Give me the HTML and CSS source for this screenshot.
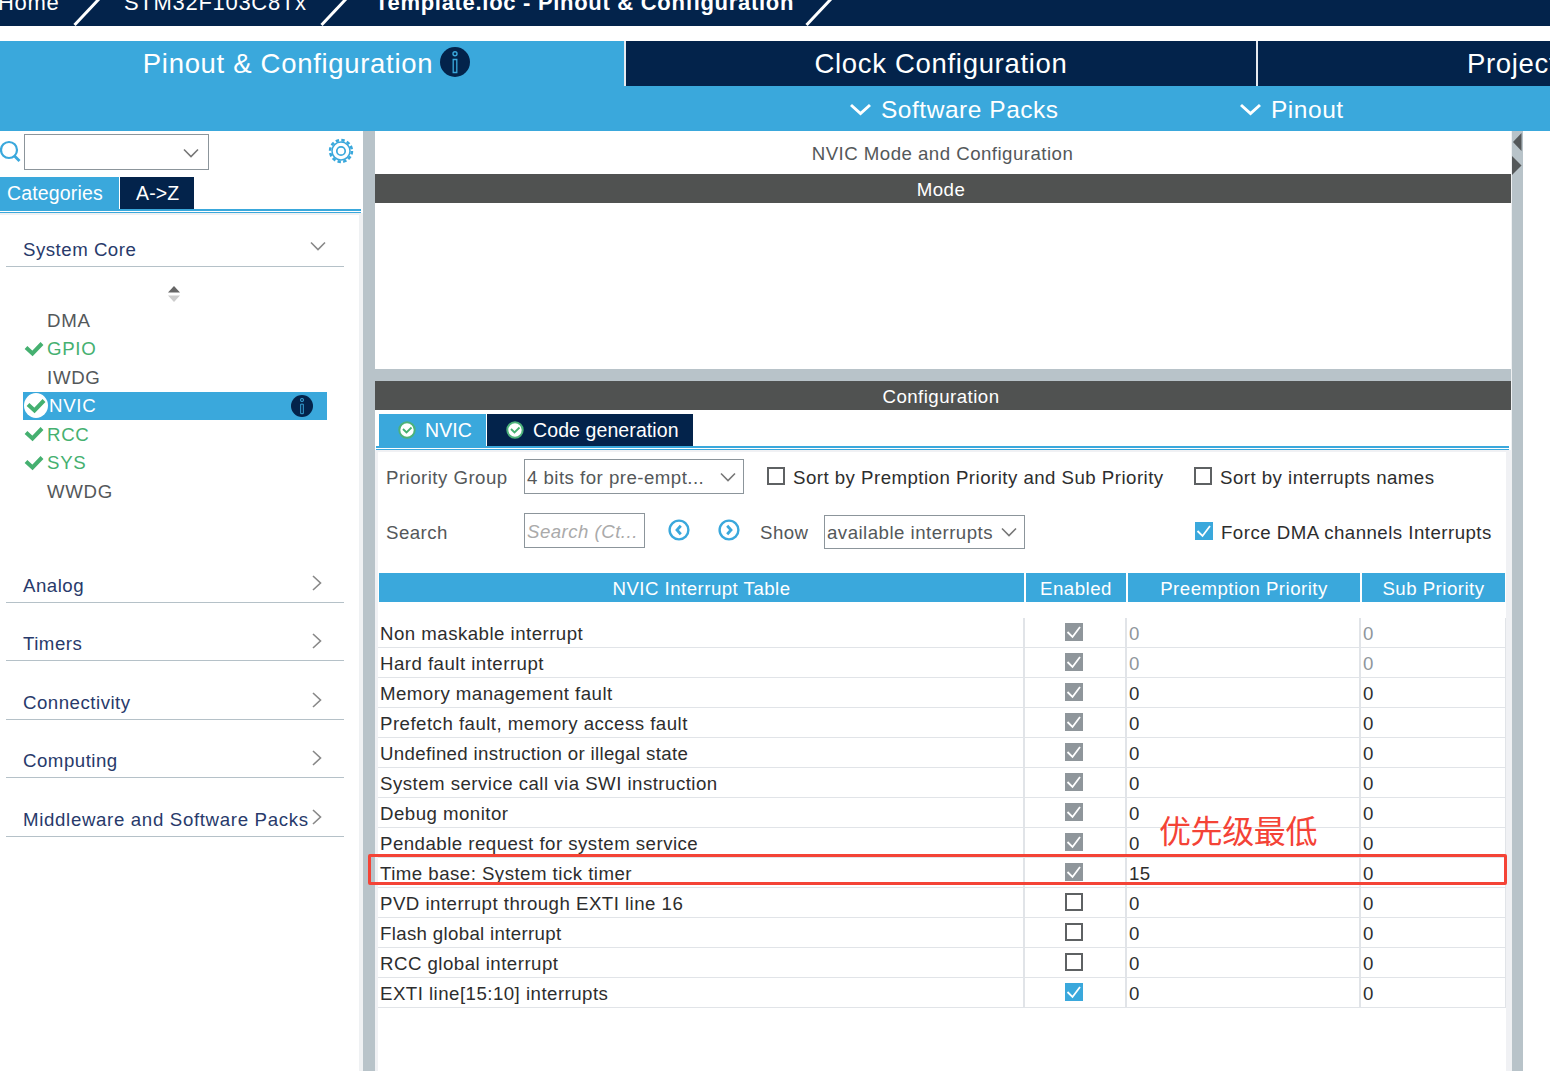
FILE: index.html
```html
<!DOCTYPE html>
<html lang="en">
<head>
    <meta charset="UTF-8">
    <meta name="viewport" content="width=device-width, initial-scale=1.0">
    <title>Template.ioc - Pinout &amp; Configuration</title>
    <link rel="stylesheet" href="styles.css">
</head>
<body>
    <svg class="defs">
        <symbol id="down" viewBox="0 0 16 10"><path d="M1 1.5 L8 8.5 L15 1.5" fill="none" stroke="currentColor"/></symbol>
        <symbol id="right" viewBox="0 0 10 16"><path d="M1 1 L8.5 8 L1 15" fill="none" stroke="currentColor" stroke-width="1.6"/></symbol>
        <symbol id="tick" viewBox="0 0 18 18"><path d="M2.5 9 L7.5 14 L15 4" fill="none" stroke="#fff" stroke-width="1.8"/></symbol>
        <symbol id="check" viewBox="0 0 20 16"><path d="M2 6.5 L8.5 12.5 L18 2.5" fill="none" stroke="#45b070" stroke-width="4"/></symbol>
        <symbol id="info" viewBox="0 0 30 30"><circle cx="15" cy="15" r="15" fill="#03234b"/><circle cx="15" cy="6.8" r="2" fill="none" stroke="#3aa8dc" stroke-width="1.4"/><path d="M13.2 12.5 h3.6 v13 h-3.6 z" fill="none" stroke="#3aa8dc" stroke-width="1.3"/></symbol>
        <symbol id="ok" viewBox="0 0 18 18"><circle cx="9" cy="9" r="7.7" fill="#fff" stroke="#4db27a" stroke-width="2"/><path d="M5 8 L8.5 11.5 L13.5 6.5" fill="none" stroke="#45b070" stroke-width="1.8"/></symbol>
    </svg>

    <!-- Breadcrumb -->
    <div class="breadcrumb">
        <span class="crumb home">Home</span>
        <svg class="slash" width="28" height="26"><path d="M1.5 25 L26 -1" stroke="#fff" stroke-width="3"/></svg>
        <span class="crumb chip">STM32F103C8Tx</span>
        <svg class="slash" width="28" height="26"><path d="M1.5 25 L26 -1" stroke="#fff" stroke-width="3"/></svg>
        <span class="crumb file">Template.ioc - Pinout &amp; Configuration</span>
        <svg class="slash" width="28" height="26"><path d="M1.5 25 L26 -1" stroke="#fff" stroke-width="3"/></svg>
    </div>

    <!-- Main tabs -->
    <div class="tabs">
        <div class="tab active">Pinout &amp; Configuration<svg width="30" height="30"><use href="#info"/></svg></div>
        <div class="tab">Clock Configuration</div>
        <div class="tab">Project Manager</div>
    </div>
    <div class="subbar">
        <div class="menu packs"><svg width="21" height="13" viewBox="0 0 21 13"><path d="M1 2 L10.5 10.5 L20 2" fill="none" stroke="#fff" stroke-width="3"/></svg>Software Packs</div>
        <div class="menu"><svg width="21" height="13" viewBox="0 0 21 13"><path d="M1 2 L10.5 10.5 L20 2" fill="none" stroke="#fff" stroke-width="3"/></svg>Pinout</div>
    </div>

    <div class="main">
        <div class="sidebar">
            <div class="search-row">
                <svg width="21" height="23" viewBox="0 0 21 23" fill="none" stroke="#3aa8dc"><circle cx="9" cy="10" r="8" stroke-width="2.2"/><path d="M14 15.5 L19.5 21" stroke-width="2.8"/></svg>
                <div class="combo search"><svg width="16" height="10"><use href="#down"/></svg></div>
                <svg class="gear" width="26" height="26" viewBox="0 0 26 26" fill="none" stroke="#3aa8dc">
                    <circle cx="13" cy="13" r="10.9" stroke-width="2.6" stroke-dasharray="3.4 2.307"/>
                    <circle cx="13" cy="13" r="9" stroke-width="1.5"/>
                    <circle cx="13" cy="13" r="4.2" stroke-width="1.7"/>
                </svg>
            </div>
            <div class="side-tabs">
                <span class="side-tab active">Categories</span>
                <span class="side-tab">A-&gt;Z</span>
            </div>
            <div class="double-line"></div>
            <div class="side-body">
                <div class="category open">System Core<svg width="16" height="10"><use href="#down" stroke-width="1.6"/></svg></div>
                <svg class="sorter" width="14" height="16" viewBox="0 0 14 16"><path d="M1 6.5 L7 0 L13 6.5z" fill="#666"/><path d="M1 9.5 L7 16 L13 9.5z" fill="#ccc"/></svg>
                <ul class="ip-list">
                    <li>DMA</li>
                    <li class="set"><svg width="20" height="16"><use href="#check"/></svg>GPIO</li>
                    <li>IWDG</li>
                    <li class="selected"><span class="disc"><svg width="20" height="16"><use href="#check"/></svg></span>NVIC<svg class="info" width="22" height="22"><use href="#info"/></svg></li>
                    <li class="set"><svg width="20" height="16"><use href="#check"/></svg>RCC</li>
                    <li class="set"><svg width="20" height="16"><use href="#check"/></svg>SYS</li>
                    <li>WWDG</li>
                </ul>
                <div class="category">Analog<svg width="10" height="16"><use href="#right"/></svg></div>
                <div class="category">Timers<svg width="10" height="16"><use href="#right"/></svg></div>
                <div class="category">Connectivity<svg width="10" height="16"><use href="#right"/></svg></div>
                <div class="category">Computing<svg width="10" height="16"><use href="#right"/></svg></div>
                <div class="category long">Middleware and Software Packs<svg width="10" height="16"><use href="#right"/></svg></div>
            </div>
        </div>
        <div class="splitter"></div>

        <div class="panel">
            <div class="panel-title">NVIC Mode and Configuration</div>
            <div class="bar">Mode</div>
            <div class="mode-body"></div>
            <div class="h-splitter"></div>
            <div class="bar">Configuration</div>
            <div class="config-tabs">
                <div class="config-tab active"><svg width="18" height="18"><use href="#ok"/></svg>NVIC</div>
                <div class="config-tab"><svg width="18" height="18"><use href="#ok"/></svg>Code generation</div>
            </div>
            <div class="double-line config-line"></div>
            <div class="config-body">
                <div class="options first">
                    <span class="label">Priority Group</span>
                    <div class="combo group">4 bits for pre-empt...<svg width="16" height="10"><use href="#down"/></svg></div>
                    <span class="box"></span><span class="option-text wide">Sort by Premption Priority and Sub Priority</span>
                    <span class="box"></span><span class="option-text">Sort by interrupts names</span>
                </div>
                <div class="options second">
                    <span class="label">Search</span>
                    <div class="combo find">Search (Ct...</div>
                    <svg class="nav" width="22" height="22" viewBox="0 0 22 22" fill="none" stroke="#3aa8dc"><circle cx="11" cy="11" r="9.4" stroke-width="2.4"/><path d="M12.8 6.8 L9 11 L12.8 15.2" stroke-width="2.8"/></svg>
                    <svg class="nav" width="22" height="22" viewBox="0 0 22 22" fill="none" stroke="#3aa8dc"><circle cx="11" cy="11" r="9.4" stroke-width="2.4"/><path d="M9.2 6.8 L13 11 L9.2 15.2" stroke-width="2.8"/></svg>
                    <span class="show">Show</span>
                    <div class="combo avail">available interrupts<svg width="16" height="10"><use href="#down"/></svg></div>
                    <span class="box on"><svg><use href="#tick"/></svg></span><span class="option-text">Force DMA channels Interrupts</span>
                </div>

                <div class="row head">
                    <div class="name">NVIC Interrupt Table</div><div class="enabled">Enabled</div><div class="pre">Preemption Priority</div><div class="sub">Sub Priority</div>
                </div>
                <div class="rows">
                    <div class="row fixed"><div class="name">Non maskable interrupt</div><div class="enabled"><span class="box lock"><svg><use href="#tick"/></svg></span></div><div class="pre">0</div><div class="sub">0</div></div>
                    <div class="row fixed"><div class="name">Hard fault interrupt</div><div class="enabled"><span class="box lock"><svg><use href="#tick"/></svg></span></div><div class="pre">0</div><div class="sub">0</div></div>
                    <div class="row"><div class="name">Memory management fault</div><div class="enabled"><span class="box lock"><svg><use href="#tick"/></svg></span></div><div class="pre">0</div><div class="sub">0</div></div>
                    <div class="row"><div class="name">Prefetch fault, memory access fault</div><div class="enabled"><span class="box lock"><svg><use href="#tick"/></svg></span></div><div class="pre">0</div><div class="sub">0</div></div>
                    <div class="row"><div class="name narrow">Undefined instruction or illegal state</div><div class="enabled"><span class="box lock"><svg><use href="#tick"/></svg></span></div><div class="pre">0</div><div class="sub">0</div></div>
                    <div class="row"><div class="name">System service call via SWI instruction</div><div class="enabled"><span class="box lock"><svg><use href="#tick"/></svg></span></div><div class="pre">0</div><div class="sub">0</div></div>
                    <div class="row"><div class="name">Debug monitor</div><div class="enabled"><span class="box lock"><svg><use href="#tick"/></svg></span></div><div class="pre">0</div><div class="sub">0</div></div>
                    <div class="row"><div class="name">Pendable request for system service</div><div class="enabled"><span class="box lock"><svg><use href="#tick"/></svg></span></div><div class="pre">0</div><div class="sub">0</div></div>
                    <div class="row marked"><div class="name">Time base: System tick timer</div><div class="enabled"><span class="box lock"><svg><use href="#tick"/></svg></span></div><div class="pre">15</div><div class="sub">0</div>
                        <div class="mark"></div>
                        <div class="note">优先级最低</div>
                    </div>
                    <div class="row"><div class="name">PVD interrupt through EXTI line 16</div><div class="enabled"><span class="box"></span></div><div class="pre">0</div><div class="sub">0</div></div>
                    <div class="row"><div class="name narrow">Flash global interrupt</div><div class="enabled"><span class="box"></span></div><div class="pre">0</div><div class="sub">0</div></div>
                    <div class="row"><div class="name">RCC global interrupt</div><div class="enabled"><span class="box"></span></div><div class="pre">0</div><div class="sub">0</div></div>
                    <div class="row"><div class="name">EXTI line[15:10] interrupts</div><div class="enabled"><span class="box on"><svg><use href="#tick"/></svg></span></div><div class="pre">0</div><div class="sub">0</div></div>
                </div>
            </div>
        </div>
        <div class="splitter right">
            <svg width="11" height="48" viewBox="0 0 11 48" fill="#54585a"><path d="M9.5 2 V20 L1 11z"/><path d="M0 25 V44 L9.5 34.5z"/></svg>
        </div>
    </div>
</body>
</html>
```
FILE: styles.css
```css
* {
    box-sizing: border-box;
}
body {
    margin: 0;
    width: 1550px;
    height: 1071px;
    overflow: hidden;
    background: #fff;
    font-family: "Liberation Sans", Arial, sans-serif;
    font-size: 18.67px;
    letter-spacing: 0.47px;
    color: #2d2d2d;
    white-space: nowrap;
    display: flex;
    flex-direction: column;
}
svg {
    flex: none;
    display: block;
}
.defs {
    position: absolute;
    width: 0;
    height: 0;
}

/* Breadcrumb */
.breadcrumb {
    height: 26px;
    background: #03234b;
    color: #fff;
    display: flex;
    overflow: hidden;
    flex: none;
    font-size: 22px;
    letter-spacing: 0.7px;
}
.crumb {
    line-height: 26px;
    margin-top: -10px;
}
.home {
    width: 73px;
    text-indent: -2px;
}
.chip {
    width: 219px;
    padding-left: 23px;
}
.file {
    width: 457px;
    padding-left: 27px;
    font-weight: bold;
}

/* Main tabs */
.tabs {
    display: flex;
    height: 45px;
    margin-top: 15px;
    flex: none;
    font-size: 27.5px;
    letter-spacing: 0.69px;
    color: #fff;
    overflow: hidden;
}
.tab {
    width: 632px;
    flex: none;
    background: #03234b;
    border-left: 2px solid #e6eaf0;
    display: flex;
    align-items: center;
    justify-content: center;
}
.tab.active {
    width: 624px;
    background: #3aa8dc;
    border: none;
    padding-right: 11px;
}
.tab svg {
    margin-left: 7px;
    margin-top: -3px;
}
.subbar {
    height: 45px;
    flex: none;
    background: #3aa8dc;
    color: #fff;
    display: flex;
    padding-left: 850px;
    font-size: 24.5px;
    letter-spacing: 0.53px;
}
.menu {
    display: flex;
    align-items: center;
    padding-top: 2px;
}
.menu.packs {
    width: 390px;
}
.menu svg {
    margin-right: 10px;
}

.main {
    flex: 1;
    display: flex;
    min-height: 0;
}

/* Sidebar */
.sidebar {
    width: 363px;
    flex: none;
    display: flex;
    flex-direction: column;
}
.search-row {
    height: 46px;
    display: flex;
    align-items: flex-start;
    padding-top: 3px;
}
.search-row > svg {
    margin-top: 6px;
}
.combo {
    border: 1px solid #8c959b;
    display: flex;
    align-items: center;
    justify-content: space-between;
    color: #54585a;
    padding-left: 2px;
    padding-right: 7px;
    padding-top: 2px;
    flex: none;
}
.combo svg {
    color: #777;
    stroke-width: 1.6;
    margin-top: -1px;
}
.combo.search {
    width: 185px;
    height: 36px;
    margin-left: 3px;
    padding-right: 9px;
    justify-content: flex-end;
}
.search-row .gear {
    margin-left: 119px;
    margin-top: 4px;
}
.side-tabs {
    display: flex;
    gap: 1px;
    height: 32px;
    font-size: 19.5px;
    letter-spacing: 0.15px;
    color: #fff;
}
.side-tab {
    width: 74px;
    background: #03234b;
    line-height: 32px;
    padding-left: 16px;
}
.side-tab.active {
    width: 119px;
    background: #3aa8dc;
    padding-left: 7px;
}
.double-line {
    height: 4px;
    flex: none;
    width: 361px;
    border-top: 2px solid #3aa8dc;
    border-bottom: 1px solid #3aa8dc;
}
.side-body {
    flex: 1;
    border-top: 2px solid #eff1f3;
    border-right: 4px solid #eff1f3;
    padding: 11px 15px 0 6px;
}
.category {
    height: 58.5px;
    border-bottom: 1px solid #b5c1c8;
    display: flex;
    justify-content: space-between;
    align-items: flex-end;
    padding: 0 22px 5px 17px;
    color: #283a6b;
    letter-spacing: 0.5px;
}
.category.long {
    letter-spacing: 0.66px;
}
.category svg {
    margin-bottom: 6px;
    color: #888;
    margin-left: -20px;
}
.category.open {
    height: 41px;
    padding-right: 18px;
}
.category.open svg {
    margin-bottom: 10px;
    stroke-width: 1.6;
}
.sorter {
    margin: 19px 0 0 161px;
}
.ip-list {
    list-style: none;
    margin: 4px 0 0;
    padding: 0 17px 38.6px 17px;
    color: #54585a;
}
.ip-list li {
    height: 28.5px;
    padding-left: 24px;
    display: flex;
    align-items: center;
    padding-top: 1px;
    letter-spacing: 0.7px;
}
.ip-list .set {
    padding-left: 1px;
    color: #45b070;
}
.ip-list .set svg {
    margin-right: 3px;
    margin-top: -1px;
}
.ip-list .selected {
    background: #3aa8dc;
    color: #fff;
    padding-left: 1px;
}
.disc {
    width: 24px;
    height: 25px;
    border-radius: 50%;
    background: #fff;
    display: flex;
    align-items: center;
    justify-content: center;
    margin-right: 1px;
    margin-top: -1px;
}
.ip-list .info {
    margin-left: auto;
    margin-right: 14px;
    margin-top: -1px;
}

/* Splitters */
.splitter {
    width: 12px;
    flex: none;
    background: #b8c3c9;
}
.splitter.right {
    border-left: 1px solid #eff1f3;
}
.h-splitter {
    height: 12px;
    background: #b8c3c9;
}

/* Right panel */
.panel {
    width: 1136px;
    flex: none;
    display: flex;
    flex-direction: column;
}
.panel-title {
    height: 43px;
    line-height: 45px;
    text-align: center;
    color: #54585a;
    padding-right: 1px;
}
.bar {
    height: 29px;
    line-height: 31px;
    background: #505251;
    color: #fff;
    text-align: center;
    padding-right: 4px;
}
.mode-body {
    height: 166px;
}
.config-tabs {
    height: 36px;
    padding: 4px 0 0 4px;
    display: flex;
    gap: 1px;
    font-size: 19.5px;
    letter-spacing: 0.1px;
    color: #fff;
}
.config-tab {
    width: 206px;
    background: #03234b;
    display: flex;
    align-items: center;
    padding-left: 19px;
    gap: 9px;
}
.config-tab.active {
    width: 107px;
    background: #3aa8dc;
}
.config-line {
    width: 1133px;
    margin-left: 1px;
}
.config-body {
    flex: 1;
    border: solid #f0f1f4;
    border-width: 2px 5px 0 3px;
    padding-left: 1px;
}
.options {
    display: flex;
    align-items: center;
    padding-left: 7px;
}
.options.first {
    margin-top: 7px;
    height: 35px;
}
.options.second {
    margin-top: 19px;
    height: 37px;
}
.label {
    width: 138px;
    color: #54585a;
    padding-top: 2px;
}
.combo.group {
    width: 220px;
    height: 35px;
    margin-right: 23px;
}
.combo.find {
    width: 121px;
    height: 35px;
    color: #aaa;
    font-style: italic;
    margin: -2px 23px 0 0;
}
.nav {
    margin: -3px 28px 0 0;
}
.show {
    width: 64px;
    margin-left: 4px;
    color: #54585a;
    padding-top: 2px;
}
.options .nav + .show {
    margin-left: -8px;
}
.combo.avail {
    width: 201px;
    height: 34px;
    margin-right: 170px;
}
.box {
    width: 18px;
    height: 18px;
    flex: none;
    border: 2px solid #5e6163;
    display: block;
}
.options .box {
    margin-top: -2px;
}
.box svg {
    width: 18px;
    height: 18px;
}
.box.on {
    border: none;
    background: #3aa8dc;
}
.box.lock {
    border: none;
    background: #8f969b;
}
.option-text {
    margin-left: 8px;
    padding-top: 2px;
}
.option-text.wide {
    width: 401px;
}

/* Interrupt table */
.row {
    display: flex;
    width: 1128px;
    height: 30px;
    line-height: 32px;
    border-bottom: 1px solid #e1e4e8;
}
.row > .name {
    width: 647px;
    padding-left: 1px;
}
.row > .enabled {
    width: 102px;
    padding-left: 40px;
    padding-top: 5px;
}
.row > .pre {
    width: 234px;
}
.row > .sub {
    width: 145px;
}
.row > .name, .row > .enabled, .row > .pre {
    border-right: 2px solid #e1e4e8;
}
.row > .pre, .row > .sub {
    padding-left: 2px;
}
.row > .sub {
    border-right: 1px solid #e1e4e8;
}
.row.fixed > .pre, .row.fixed > .sub {
    color: #8f969b;
}
.head {
    margin-top: 23px;
    width: 1126px;
    height: 29px;
    border: none;
    color: #fff;
    text-align: center;
    background: #3aa8dc;
}
.row.head > div {
    padding: 0;
    border-color: #fff;
}
.row.head > .name {
    width: 647px;
}
.row.head > .sub {
    width: 143px;
    border: none;
}
.rows {
    padding-top: 16px;
    margin-left: -1px;
}
.rows .name {
    padding-left: 2px;
}
.rows .narrow {
    letter-spacing: 0.33px;
}

/* Highlight over the tick timer row */
.marked {
    position: relative;
}
.mark {
    position: absolute;
    left: -10px;
    top: -4px;
    width: 1139px;
    height: 31px;
    border: 3px solid #f44336;
    border-radius: 2px;
}
.note {
    position: absolute;
    left: 781px;
    top: -52px;
    font-family: "Noto Sans CJK SC", sans-serif;
    font-size: 32px;
    font-weight: 400;
    line-height: 46px;
    letter-spacing: -0.4px;
    color: #f44336;
}
```
